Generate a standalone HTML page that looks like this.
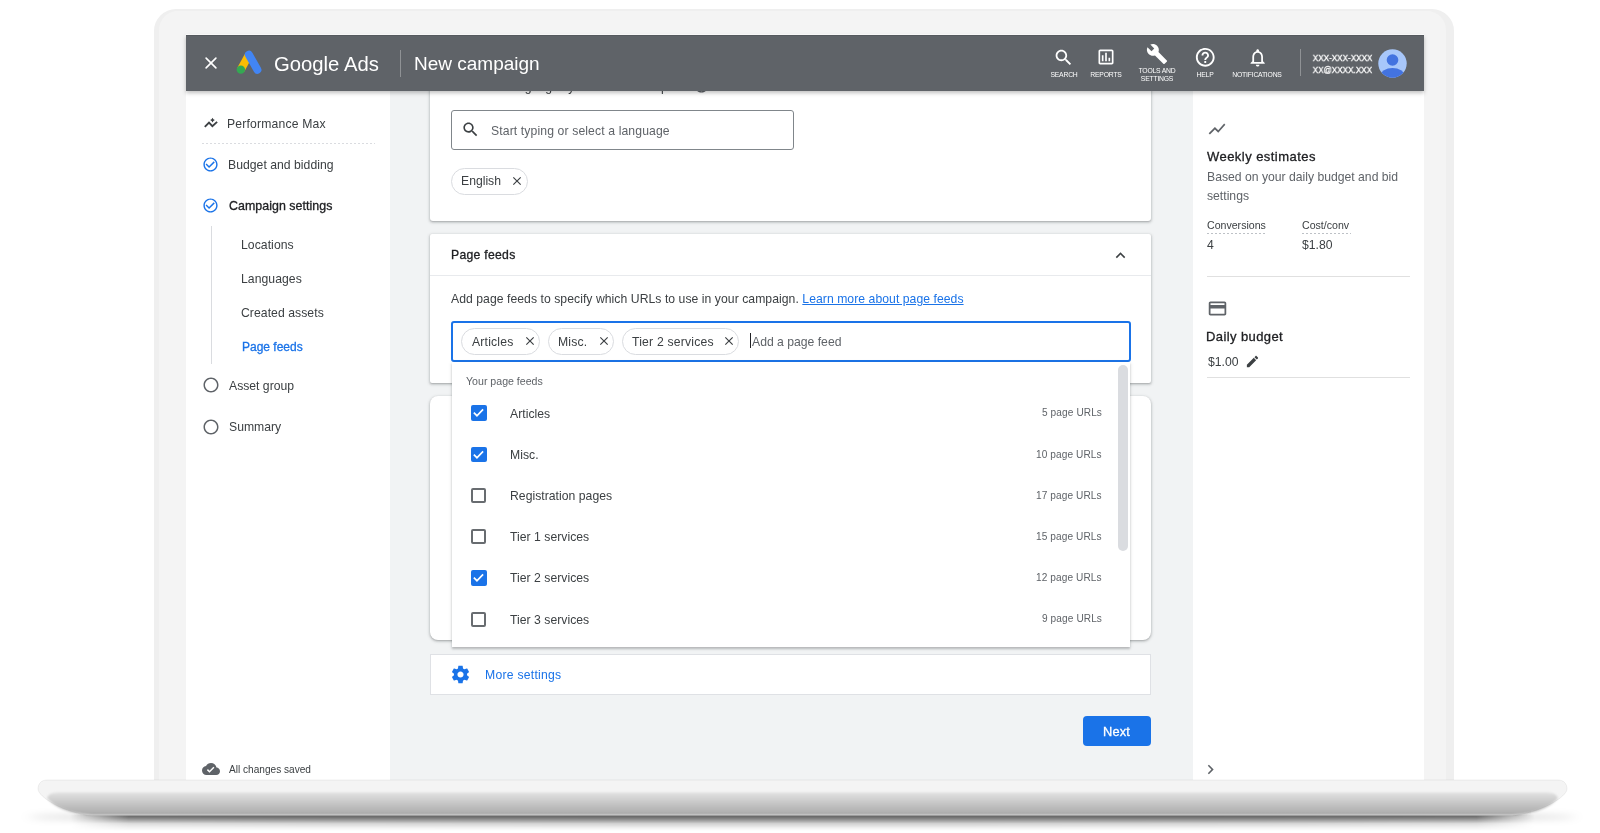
<!DOCTYPE html>
<html><head><meta charset="utf-8"><style>
html,body{margin:0;padding:0;width:1600px;height:833px;overflow:hidden;background:#fff;position:relative;}
.t{position:absolute;white-space:nowrap;font-family:"Liberation Sans", sans-serif;will-change:transform;}
svg{display:block;}
</style></head><body>
<div style="position:absolute;left:154px;top:8.5px;width:1300px;height:800px;background:#efefef;border-radius:22px 22px 0 0;"></div>
<div style="position:absolute;left:159px;top:10.5px;width:1287px;height:800px;background:#f4f4f4;border-radius:19px 19px 0 0;"></div>
<div style="position:absolute;left:186px;top:35px;width:1238px;height:745px;background:#f1f3f4;overflow:hidden;"></div>
<div style="position:absolute;left:186px;top:91px;width:204px;height:689px;background:#fff;"></div>
<div style="position:absolute;left:1193px;top:91px;width:231px;height:689px;background:#fff;"></div>
<div style="position:absolute;left:430px;top:60px;width:721px;height:161px;background:#fff;box-shadow:0 1px 2px rgba(60,64,67,.3),0 1px 3px 1px rgba(60,64,67,.15);border-radius:0 0 3px 3px;"></div>
<div class="t" style="left:451px;top:80.67px;font-size:12.2px;line-height:12.2px;color:#3c4043;font-weight:400;">Select the languages your customers speak</div>
<svg style="position:absolute;left:692.5px;top:77px;" width="17" height="17" viewBox="0 0 24 24"><path fill="#5f6368" d="M11 18h2v-2h-2v2zm1-16C6.48 2 2 6.48 2 12s4.48 10 10 10 10-4.48 10-10S17.52 2 12 2zm0 18c-4.41 0-8-3.59-8-8s3.590-8 8-8 8 3.59 8 8-3.59 8-8 8zm0-14c-2.21 0-4 1.79-4 4h2c0-1.1.9-2 2-2s2 .9 2 2c0 2-3 1.75-3 5h2c0-2.25 3-2.5 3-5 0-2.21-1.79-4-4-4z"/></svg>
<div style="position:absolute;left:451px;top:109.5px;width:343px;height:40px;box-sizing:border-box;border:1px solid #80868b;border-radius:3px;background:#fff;"></div>
<svg style="position:absolute;left:461px;top:120px;" width="19" height="19" viewBox="0 0 24 24"><path fill="#3c4043" d="M15.5 14h-.79l-.28-.27C15.410 12.59 16 11.11 16 9.5 16 5.91 13.09 3 9.5 3S3 5.91 3 9.5 5.91 16 9.5 16c1.61 0 3.09-.59 4.23-1.57l.27.28v.79l5 4.99L20.49 19l-4.99-5zm-6 0C7.01 14 5 11.99 5 9.5S7.01 5 9.5 5 14 7.01 14 9.5 11.99 14 9.5 14z"/></svg>
<div class="t" style="left:491px;top:124.57px;font-size:12.2px;line-height:12.2px;color:#5f6368;font-weight:400;letter-spacing:0.12px;">Start typing or select a language</div>
<div style="position:absolute;left:451px;top:167.5px;width:77px;height:27px;box-sizing:border-box;border:1px solid #dadce0;border-radius:14px;"></div>
<div class="t" style="left:461.4px;top:175.27px;font-size:12.2px;line-height:12.2px;color:#3c4043;font-weight:400;">English</div>
<svg style="position:absolute;left:510px;top:174px;" width="14" height="14" viewBox="0 0 24 24"><path fill="#3c4043" d="M19 6.41L17.59 5 12 10.59 6.41 5 5 6.41 10.59 12 5 17.59 6.41 19 12 13.41 17.59 19 19 17.59 13.41 12z"/></svg>
<div style="position:absolute;left:430px;top:234px;width:721px;height:148.5px;background:#fff;box-shadow:0 1px 2px rgba(60,64,67,.3),0 1px 3px 1px rgba(60,64,67,.15);border-radius:2px;"></div>
<div class="t" style="left:451px;top:248.87px;font-size:12.2px;line-height:12.2px;color:#202124;font-weight:400;letter-spacing:0.29px;-webkit-text-stroke:0.3px #202124;">Page feeds</div>
<svg style="position:absolute;left:1111px;top:245.5px;" width="19" height="19" viewBox="0 0 24 24"><path fill="#3c4043" d="M12 8l-6 6 1.41 1.41L12 10.83l4.59 4.58L18 14z"/></svg>
<div style="position:absolute;left:430px;top:274.5px;width:721px;height:1px;background:#e8eaed;"></div>
<div class="t" style="left:451px;top:292.57px;font-size:12.2px;line-height:12.2px;color:#3c4043;font-weight:400;letter-spacing:0.05px;">Add page feeds to specify which URLs to use in your campaign. <span style="color:#1a73e8;text-decoration:underline">Learn more about page feeds</span></div>
<div style="position:absolute;left:451px;top:321px;width:679.5px;height:40.5px;box-sizing:border-box;border:2px solid #1a73e8;border-radius:3px;background:#fff;"></div>
<div style="position:absolute;left:461px;top:327.6px;width:79px;height:27px;box-sizing:border-box;border:1px solid #dadce0;border-radius:14px;"></div>
<div class="t" style="left:472px;top:335.77px;font-size:12.2px;line-height:12.2px;color:#3c4043;font-weight:400;letter-spacing:0.2px;">Articles</div>
<svg style="position:absolute;left:523px;top:334px;" width="14" height="14" viewBox="0 0 24 24"><path fill="#3c4043" d="M19 6.41L17.59 5 12 10.59 6.41 5 5 6.41 10.59 12 5 17.59 6.41 19 12 13.41 17.59 19 19 17.59 13.41 12z"/></svg>
<div style="position:absolute;left:547.6px;top:327.6px;width:66.39999999999998px;height:27px;box-sizing:border-box;border:1px solid #dadce0;border-radius:14px;"></div>
<div class="t" style="left:558.4px;top:335.77px;font-size:12.2px;line-height:12.2px;color:#3c4043;font-weight:400;letter-spacing:0.2px;">Misc.</div>
<svg style="position:absolute;left:597px;top:334px;" width="14" height="14" viewBox="0 0 24 24"><path fill="#3c4043" d="M19 6.41L17.59 5 12 10.59 6.41 5 5 6.41 10.59 12 5 17.59 6.41 19 12 13.41 17.59 19 19 17.59 13.41 12z"/></svg>
<div style="position:absolute;left:621.6px;top:327.6px;width:117.79999999999995px;height:27px;box-sizing:border-box;border:1px solid #dadce0;border-radius:14px;"></div>
<div class="t" style="left:632.4px;top:335.77px;font-size:12.2px;line-height:12.2px;color:#3c4043;font-weight:400;letter-spacing:0.2px;">Tier 2 services</div>
<svg style="position:absolute;left:722px;top:334px;" width="14" height="14" viewBox="0 0 24 24"><path fill="#3c4043" d="M19 6.41L17.59 5 12 10.59 6.41 5 5 6.41 10.59 12 5 17.59 6.41 19 12 13.41 17.59 19 19 17.59 13.41 12z"/></svg>
<div style="position:absolute;left:749.5px;top:333px;width:1px;height:15px;background:#202124;"></div>
<div class="t" style="left:752px;top:335.77px;font-size:12.2px;line-height:12.2px;color:#5f6368;font-weight:400;">Add a page feed</div>
<div style="position:absolute;left:430px;top:396px;width:721px;height:244px;background:#fff;box-shadow:0 1px 2px rgba(60,64,67,.3),0 1px 3px 1px rgba(60,64,67,.15);border-radius:8px;"></div>
<div style="position:absolute;left:451.5px;top:361.5px;width:678.5px;height:285.5px;background:#fff;box-shadow:0 2px 2px rgba(60,64,67,.25),0 1px 4px 0 rgba(60,64,67,.15);"></div>
<div class="t" style="left:465.6px;top:375.93px;font-size:10.6px;line-height:10.6px;color:#5f6368;font-weight:400;">Your page feeds</div>
<div style="position:absolute;left:1118px;top:365px;width:10px;height:186px;background:#dadce0;border-radius:5px;"></div>
<div style="position:absolute;left:471.3px;top:405.3px;width:15.6px;height:15.6px;background:#1a73e8;border-radius:2px;"></div>
<svg style="position:absolute;left:471.3px;top:405.3px;" width="15.6" height="15.6" viewBox="0 0 16 16"><path d="M2.9 7.9l3.2 3.1 6.3-6.6" fill="none" stroke="#fff" stroke-width="1.75"/></svg>
<div class="t" style="left:509.8px;top:407.57px;font-size:12.2px;line-height:12.2px;color:#3c4043;font-weight:400;letter-spacing:0.03px;">Articles</div>
<div class="t" style="right:498px;top:408.45px;font-size:10.1px;line-height:10.1px;color:#5f6368;font-weight:400;letter-spacing:0.1px;">5 page URLs</div>
<div style="position:absolute;left:471.3px;top:446.5px;width:15.6px;height:15.6px;background:#1a73e8;border-radius:2px;"></div>
<svg style="position:absolute;left:471.3px;top:446.5px;" width="15.6" height="15.6" viewBox="0 0 16 16"><path d="M2.9 7.9l3.2 3.1 6.3-6.6" fill="none" stroke="#fff" stroke-width="1.75"/></svg>
<div class="t" style="left:509.8px;top:448.77px;font-size:12.2px;line-height:12.2px;color:#3c4043;font-weight:400;letter-spacing:0.03px;">Misc.</div>
<div class="t" style="right:498px;top:449.65px;font-size:10.1px;line-height:10.1px;color:#5f6368;font-weight:400;letter-spacing:0.1px;">10 page URLs</div>
<div style="position:absolute;left:471px;top:488.0px;width:15.3px;height:15.3px;box-sizing:border-box;border:2px solid #686c70;border-radius:2px;"></div>
<div class="t" style="left:509.8px;top:489.97px;font-size:12.2px;line-height:12.2px;color:#3c4043;font-weight:400;letter-spacing:0.03px;">Registration pages</div>
<div class="t" style="right:498px;top:490.85px;font-size:10.1px;line-height:10.1px;color:#5f6368;font-weight:400;letter-spacing:0.1px;">17 page URLs</div>
<div style="position:absolute;left:471px;top:529.2px;width:15.3px;height:15.3px;box-sizing:border-box;border:2px solid #686c70;border-radius:2px;"></div>
<div class="t" style="left:509.8px;top:531.17px;font-size:12.2px;line-height:12.2px;color:#3c4043;font-weight:400;letter-spacing:0.03px;">Tier 1 services</div>
<div class="t" style="right:498px;top:532.05px;font-size:10.1px;line-height:10.1px;color:#5f6368;font-weight:400;letter-spacing:0.1px;">15 page URLs</div>
<div style="position:absolute;left:471.3px;top:570.1000000000001px;width:15.6px;height:15.6px;background:#1a73e8;border-radius:2px;"></div>
<svg style="position:absolute;left:471.3px;top:570.1000000000001px;" width="15.6" height="15.6" viewBox="0 0 16 16"><path d="M2.9 7.9l3.2 3.1 6.3-6.6" fill="none" stroke="#fff" stroke-width="1.75"/></svg>
<div class="t" style="left:509.8px;top:572.37px;font-size:12.2px;line-height:12.2px;color:#3c4043;font-weight:400;letter-spacing:0.03px;">Tier 2 services</div>
<div class="t" style="right:498px;top:573.25px;font-size:10.1px;line-height:10.1px;color:#5f6368;font-weight:400;letter-spacing:0.1px;">12 page URLs</div>
<div style="position:absolute;left:471px;top:611.6px;width:15.3px;height:15.3px;box-sizing:border-box;border:2px solid #686c70;border-radius:2px;"></div>
<div class="t" style="left:509.8px;top:613.57px;font-size:12.2px;line-height:12.2px;color:#3c4043;font-weight:400;letter-spacing:0.03px;">Tier 3 services</div>
<div class="t" style="right:498px;top:614.45px;font-size:10.1px;line-height:10.1px;color:#5f6368;font-weight:400;letter-spacing:0.1px;">9 page URLs</div>
<div style="position:absolute;left:430px;top:654px;width:721px;height:40.5px;box-sizing:border-box;border:1px solid #dfe1e5;background:#fff;"></div>
<svg style="position:absolute;left:449.8px;top:663.7px;" width="21" height="21" viewBox="0 0 24 24"><path fill="#1a73e8" d="M19.43 12.98c.04-.32.07-.64.07-.98s-.03-.66-.07-.98l2.11-1.65c.19-.15.24-.42.12-.64l-2-3.46c-.12-.22-.39-.3-.61-.22l-2.49 1c-.52-.4-1.08-.73-1.69-.98l-.38-2.65C14.46 2.18 14.25 2 14 2h-4c-.25 0-.46.18-.49.42l-.38 2.65c-.61.25-1.17.59-1.69.98l-2.49-1c-.23-.09-.49 0-.61.22l-2 3.46c-.13.22-.07.49.12.64l2.11 1.650c-.04.32-.07.65-.07.98s.03.66.07.98l-2.11 1.65c-.19.15-.24.42-.12.64l2 3.46c.12.22.39.3.61.22l2.49-1c.52.4 1.08.73 1.69.98l.38 2.65c.03.24.24.42.49.42h4c.25 0 .46-.18.49-.42l.38-2.65c.61-.25 1.17-.59 1.69-.98l2.49 1c.23.09.49 0 .61-.22l2-3.46c.12-.22.07-.49-.12-.64l-2.11-1.65zM12 15.5c-1.93 0-3.5-1.57-3.5-3.5s1.57-3.5 3.5-3.5 3.5 1.57 3.5 3.5-1.57 3.5-3.5 3.5z"/></svg>
<div class="t" style="left:484.8px;top:669.17px;font-size:12.2px;line-height:12.2px;color:#1a73e8;font-weight:400;letter-spacing:0.25px;">More settings</div>
<div style="position:absolute;left:1082.5px;top:715.7px;width:68.6px;height:30.6px;background:#1a73e8;border-radius:4px;"></div>
<div class="t" style="left:1102.9px;top:726.16px;font-size:12.8px;line-height:12.8px;color:#fff;font-weight:400;letter-spacing:0.2px;-webkit-text-stroke:0.3px #fff;">Next</div>
<svg style="position:absolute;left:202px;top:116px;" width="18" height="14" viewBox="0 0 18 14"><path d="M2.8 10.8L7 6.6L10.4 10.2L15.1 5.9" fill="none" stroke="#3c4043" stroke-width="1.9"/><path d="M10.5 1.7L11.4 3.2L12.9 4.1L11.4 5L10.5 6.5L9.6 5L8.1 4.1L9.6 3.2Z" fill="#3c4043"/></svg>
<div class="t" style="left:227.2px;top:117.97px;font-size:12.2px;line-height:12.2px;color:#3c4043;font-weight:400;letter-spacing:0.17px;">Performance Max</div>
<div style="position:absolute;left:202px;top:143px;width:173px;height:1px;background-image:linear-gradient(90deg,#dadce0 50%,transparent 50%);background-size:4px 1px;"></div>
<svg style="position:absolute;left:202.4px;top:156.2px;" width="17" height="17" viewBox="0 0 24 24"><path fill="#1a73e8" d="M16.59 7.58L10 14.17l-3.59-3.58L5 12l5 5 8-8zM12 2C6.48 2 2 6.48 2 12s4.48 10 10 10 10-4.48 10-10S17.52 2 12 2zm0 18c-4.42 0-8-3.58-8-8s3.58-8 8-8 8 3.58 8 8-3.58 8-8 8z"/></svg>
<div class="t" style="left:227.6px;top:159.37px;font-size:12.2px;line-height:12.2px;color:#3c4043;font-weight:400;letter-spacing:0.03px;">Budget and bidding</div>
<svg style="position:absolute;left:202.4px;top:197.1px;" width="17" height="17" viewBox="0 0 24 24"><path fill="#1a73e8" d="M16.59 7.58L10 14.17l-3.59-3.58L5 12l5 5 8-8zM12 2C6.48 2 2 6.48 2 12s4.48 10 10 10 10-4.48 10-10S17.52 2 12 2zm0 18c-4.42 0-8-3.58-8-8s3.58-8 8-8 8 3.58 8 8-3.58 8-8 8z"/></svg>
<div class="t" style="left:228.6px;top:200.20px;font-size:12.4px;line-height:12.4px;color:#202124;font-weight:400;letter-spacing:0.05px;-webkit-text-stroke:0.3px #202124;">Campaign settings</div>
<div style="position:absolute;left:210.5px;top:226px;width:1px;height:138px;background:#dadce0;"></div>
<div class="t" style="left:241.3px;top:238.67px;font-size:12.2px;line-height:12.2px;color:#3c4043;font-weight:400;letter-spacing:0.06px;">Locations</div>
<div class="t" style="left:241.3px;top:272.87px;font-size:12.2px;line-height:12.2px;color:#3c4043;font-weight:400;letter-spacing:0.06px;">Languages</div>
<div class="t" style="left:241.3px;top:307.07px;font-size:12.2px;line-height:12.2px;color:#3c4043;font-weight:400;letter-spacing:0.06px;">Created assets</div>
<div class="t" style="left:242px;top:341.34px;font-size:12px;line-height:12px;color:#1a73e8;font-weight:400;-webkit-text-stroke:0.3px #1a73e8;">Page feeds</div>
<svg style="position:absolute;left:202px;top:376px;" width="18" height="18" viewBox="0 0 24 24"><path fill="#5f6368" d="M12 2C6.48 2 2 6.48 2 12s4.48 10 10 10 10-4.48 10-10S17.52 2 12 2zm0 18c-4.42 0-8-3.58-8-8s3.58-8 8-8 8 3.58 8 8-3.58 8-8 8z"/></svg>
<div class="t" style="left:228.6px;top:379.87px;font-size:12.2px;line-height:12.2px;color:#3c4043;font-weight:400;">Asset group</div>
<svg style="position:absolute;left:202px;top:417.5px;" width="18" height="18" viewBox="0 0 24 24"><path fill="#5f6368" d="M12 2C6.48 2 2 6.48 2 12s4.48 10 10 10 10-4.48 10-10S17.52 2 12 2zm0 18c-4.42 0-8-3.58-8-8s3.58-8 8-8 8 3.58 8 8-3.58 8-8 8z"/></svg>
<div class="t" style="left:228.6px;top:420.77px;font-size:12.2px;line-height:12.2px;color:#3c4043;font-weight:400;">Summary</div>
<svg style="position:absolute;left:202px;top:760px;" width="18" height="18" viewBox="0 0 24 24"><path fill="#5f6368" d="M19.35 10.04C18.67 6.59 15.64 4 12 4 9.11 4 6.6 5.64 5.35 8.04 2.34 8.36 0 10.91 0 14c0 3.31 2.69 6 6 6h13c2.76 0 5-2.24 5-5 0-2.64-2.05-4.78-4.65-4.96zM10 17l-3.5-3.5 1.41-1.41L10 14.17 15.18 9l1.41 1.41L10 17z"/></svg>
<div class="t" style="left:229px;top:765.15px;font-size:10.1px;line-height:10.1px;color:#3c4043;font-weight:400;">All changes saved</div>
<svg style="position:absolute;left:1207px;top:119px;" width="20" height="20" viewBox="0 0 24 24"><path fill="#5f6368" d="M3.5 18.49l6-6.01 4 4L22 6.92l-1.41-1.41-7.09 7.97-4-4L2 16.99z"/></svg>
<div class="t" style="left:1207.2px;top:149.90px;font-size:13px;line-height:13px;color:#202124;font-weight:400;letter-spacing:0.45px;-webkit-text-stroke:0.3px #202124;">Weekly estimates</div>
<div class="t" style="left:1207.2px;top:171.27px;font-size:12.2px;line-height:12.2px;color:#5f6368;font-weight:400;">Based on your daily budget and bid</div>
<div class="t" style="left:1207.2px;top:190.17px;font-size:12.2px;line-height:12.2px;color:#5f6368;font-weight:400;">settings</div>
<div class="t" style="left:1207.2px;top:220.33px;font-size:10.6px;line-height:10.6px;color:#3c4043;font-weight:400;">Conversions</div>
<div style="position:absolute;left:1207px;top:232.5px;width:59px;height:1px;background-image:linear-gradient(90deg,#bdc1c6 60%,transparent 60%);background-size:4px 1px;"></div>
<div class="t" style="left:1301.6px;top:220.33px;font-size:10.6px;line-height:10.6px;color:#3c4043;font-weight:400;">Cost/conv</div>
<div style="position:absolute;left:1301.6px;top:232.5px;width:49px;height:1px;background-image:linear-gradient(90deg,#bdc1c6 60%,transparent 60%);background-size:4px 1px;"></div>
<div class="t" style="left:1207.2px;top:238.77px;font-size:12.2px;line-height:12.2px;color:#3c4043;font-weight:400;">4</div>
<div class="t" style="left:1301.6px;top:238.77px;font-size:12.2px;line-height:12.2px;color:#3c4043;font-weight:400;">$1.80</div>
<div style="position:absolute;left:1207px;top:276px;width:203px;height:1px;background:#e0e0e0;"></div>
<svg style="position:absolute;left:1207px;top:298.3px;" width="21" height="21" viewBox="0 0 24 24"><path fill="#5f6368" d="M20 4H4c-1.11 0-1.99.89-1.99 2L2 18c0 1.11.89 2 2 2h16c1.11 0 2-.89 2-2V6c0-1.11-.89-2-2-2zm0 14H4v-6h16v6zm0-10H4V6h16v2z"/></svg>
<div class="t" style="left:1206.2px;top:329.80px;font-size:13px;line-height:13px;color:#202124;font-weight:400;letter-spacing:0.4px;-webkit-text-stroke:0.3px #202124;">Daily budget</div>
<div class="t" style="left:1207.5px;top:356.17px;font-size:12.2px;line-height:12.2px;color:#3c4043;font-weight:400;">$1.00</div>
<svg style="position:absolute;left:1245px;top:354px;" width="15" height="15" viewBox="0 0 24 24"><path fill="#3c4043" d="M3 17.25V21h3.75L17.81 9.94l-3.75-3.75L3 17.25zM20.71 7.04c.39-.39.39-1.02 0-1.41l-2.34-2.34c-.39-.39-1.02-.39-1.41 0l-1.83 1.83 3.75 3.75 1.83-1.830z"/></svg>
<div style="position:absolute;left:1207px;top:377px;width:203px;height:1px;background:#e0e0e0;"></div>
<svg style="position:absolute;left:1201px;top:760px;" width="19" height="19" viewBox="0 0 24 24"><path fill="#5f6368" d="M10 6L8.59 7.41 13.17 12l-4.58 4.59L10 18l6-6z"/></svg>
<div style="position:absolute;left:186px;top:34px;width:1238px;height:1px;background:#fff;"></div>
<div style="position:absolute;left:186px;top:35px;width:1238px;height:56px;background:#5f6368;box-shadow:0 2px 4px rgba(0,0,0,.25);border-top:1.5px solid #55595e;box-sizing:border-box;"></div>
<svg style="position:absolute;left:203.2px;top:55.4px;" width="16" height="16" viewBox="0 0 16 16"><path d="M3.1 3.1L12.9 12.9M12.9 3.1L3.1 12.9" stroke="#fff" stroke-width="1.6" stroke-linecap="round"/></svg>
<svg style="position:absolute;left:232px;top:46px;" width="34" height="32" viewBox="0 0 34 32"><line x1="16.9" y1="8.8" x2="8.85" y2="23.65" stroke="#fbbc04" stroke-width="8"/><line x1="16.9" y1="8.8" x2="25.4" y2="23.7" stroke="#4285f4" stroke-width="8" stroke-linecap="round"/><circle cx="8.85" cy="23.65" r="4.2" fill="#34a853"/></svg>
<div class="t" style="left:274px;top:54.32px;font-size:20.3px;line-height:20.3px;color:#fff;font-weight:400;">Google Ads</div>
<div style="position:absolute;left:399.5px;top:50px;width:1px;height:27px;background:rgba(255,255,255,.3);"></div>
<div class="t" style="left:414.4px;top:54.42px;font-size:19px;line-height:19px;color:#fff;font-weight:400;">New campaign</div>
<svg style="position:absolute;left:1052.9px;top:46.9px;" width="21.2" height="21.2" viewBox="0 0 24 24"><path fill="#fff" d="M15.5 14h-.79l-.28-.27C15.410 12.59 16 11.11 16 9.5 16 5.91 13.09 3 9.5 3S3 5.91 3 9.5 5.91 16 9.5 16c1.61 0 3.09-.59 4.23-1.57l.27.28v.79l5 4.99L20.49 19l-4.99-5zm-6 0C7.01 14 5 11.99 5 9.5S7.01 5 9.5 5 14 7.01 14 9.5 11.99 14 9.5 14z"/></svg>
<div class="t" style="left:1063.5px;top:72.24px;font-size:6.8px;line-height:6.8px;color:#fff;font-weight:400;transform:translateX(-50%);letter-spacing:-0.2px;">SEARCH</div>
<svg style="position:absolute;left:1096px;top:47px;" width="20" height="20" viewBox="0 0 24 24"><path fill="#fff" d="M19 3H5c-1.1 0-2 .9-2 2v14c0 1.1.9 2 2 2h14c1.1 0 2-.9 2-2V5c0-1.1-.9-2-2-2zm0 16H5V5h14v14zM7 10h2v7H7zm4-3h2v10h-2zm4 6h2v4h-2z"/></svg>
<div class="t" style="left:1106.25px;top:72.24px;font-size:6.8px;line-height:6.8px;color:#fff;font-weight:400;transform:translateX(-50%);letter-spacing:-0.2px;">REPORTS</div>
<svg style="position:absolute;left:1146px;top:43px;" width="22" height="22" viewBox="0 0 24 24"><path fill="#fff" d="M22.7 19l-9.1-9.1c.9-2.3.4-5-1.5-6.9-2-2-5-2.4-7.4-1.3L9 6 6 9 1.6 4.7C.4 7.1.9 10.1 2.9 12.1c1.9 1.9 4.6 2.4 6.9 1.5l9.1 9.1c.4.4 1 .4 1.4 0l2.3-2.3c.5-.4.5-1.1.1-1.4z"/></svg>
<div class="t" style="left:1156.75px;top:68.24px;font-size:6.8px;line-height:6.8px;color:#fff;font-weight:400;transform:translateX(-50%);letter-spacing:-0.2px;">TOOLS AND</div>
<div class="t" style="left:1156.75px;top:75.74px;font-size:6.8px;line-height:6.8px;color:#fff;font-weight:400;transform:translateX(-50%);letter-spacing:-0.2px;">SETTINGS</div>
<svg style="position:absolute;left:1193.5px;top:46px;" width="22.5" height="22.5" viewBox="0 0 24 24"><path fill="#fff" d="M11 18h2v-2h-2v2zm1-16C6.48 2 2 6.48 2 12s4.48 10 10 10 10-4.48 10-10S17.52 2 12 2zm0 18c-4.41 0-8-3.59-8-8s3.590-8 8-8 8 3.59 8 8-3.59 8-8 8zm0-14c-2.21 0-4 1.79-4 4h2c0-1.1.9-2 2-2s2 .9 2 2c0 2-3 1.75-3 5h2c0-2.25 3-2.5 3-5 0-2.21-1.79-4-4-4z"/></svg>
<div class="t" style="left:1204.5px;top:72.24px;font-size:6.8px;line-height:6.8px;color:#fff;font-weight:400;transform:translateX(-50%);letter-spacing:-0.2px;">HELP</div>
<svg style="position:absolute;left:1247px;top:46.8px;" width="21.3" height="21.3" viewBox="0 0 24 24"><path fill="#fff" d="M12 22c1.1 0 2-.9 2-2h-4c0 1.1.89 2 2 2zm6-6v-5c0-3.07-1.64-5.64-4.5-6.32V4c0-.83-.67-1.5-1.5-1.5s-1.5.67-1.5 1.5v.68C7.63 5.36 6 7.92 6 11v5l-2 2v1h16v-1l-2-2zm-2 1H8v-6c0-2.480 1.51-4.5 4-4.5s4 2.02 4 4.5v6z"/></svg>
<div class="t" style="left:1257.4px;top:72.24px;font-size:6.8px;line-height:6.8px;color:#fff;font-weight:400;transform:translateX(-50%);letter-spacing:-0.2px;">NOTIFICATIONS</div>
<div style="position:absolute;left:1300px;top:49.3px;width:1px;height:27px;background:rgba(255,255,255,.3);"></div>
<div class="t" style="right:227.79999999999995px;top:53.61px;font-size:9.2px;line-height:9.2px;color:#fff;font-weight:400;transform:scaleX(0.885);transform-origin:100% 50%;-webkit-text-stroke:0.3px #fff;">XXX-XXX-XXXX</div>
<div class="t" style="right:227.79999999999995px;top:65.61px;font-size:9.2px;line-height:9.2px;color:#fff;font-weight:400;transform:scaleX(0.885);transform-origin:100% 50%;-webkit-text-stroke:0.3px #fff;">XX@XXXX.XXX</div>
<svg style="position:absolute;left:1378px;top:49px;" width="29" height="29" viewBox="0 0 29 29"><defs><clipPath id="av"><circle cx="14.5" cy="14.5" r="14.2"/></clipPath></defs><circle cx="14.5" cy="14.5" r="14.2" fill="#a8c7fa"/><g clip-path="url(#av)"><circle cx="14.5" cy="11" r="5.8" fill="#4373e0"/><ellipse cx="14.5" cy="27" rx="12" ry="8" fill="#4373e0"/></g></svg>
<svg style="position:absolute;left:0;top:770px" width="1600" height="63" viewBox="0 770 1600 63">
<defs>
<linearGradient id="bg" gradientUnits="userSpaceOnUse" x1="0" y1="780" x2="0" y2="816">
<stop offset="0" stop-color="#f7f7f7"/><stop offset="0.3" stop-color="#f3f3f3"/><stop offset="0.4" stop-color="#dcdcdc"/><stop offset="0.93" stop-color="#adadad"/><stop offset="1" stop-color="#929292"/>
</linearGradient>
<linearGradient id="sg" gradientUnits="userSpaceOnUse" x1="0" y1="814.5" x2="0" y2="831">
<stop offset="0" stop-color="#000" stop-opacity="0.68"/><stop offset="0.2" stop-color="#000" stop-opacity="0.45"/><stop offset="0.55" stop-color="#000" stop-opacity="0.12"/><stop offset="1" stop-color="#000" stop-opacity="0"/>
</linearGradient>
<linearGradient id="mg" gradientUnits="userSpaceOnUse" x1="70" y1="0" x2="1535" y2="0"><stop offset="0" stop-color="#fff" stop-opacity="0"/><stop offset="0.04" stop-color="#fff" stop-opacity="1"/><stop offset="0.96" stop-color="#fff" stop-opacity="1"/><stop offset="1" stop-color="#fff" stop-opacity="0"/></linearGradient>
<mask id="mk"><rect x="0" y="770" width="1600" height="63" fill="url(#mg)"/></mask>
<filter id="sh" x="-5%" y="-300%" width="110%" height="700%"><feGaussianBlur stdDeviation="6 3.5"/></filter>
<filter id="b1" x="-2%" y="-50%" width="104%" height="200%"><feGaussianBlur stdDeviation="1.1"/></filter>
</defs>
<ellipse cx="802" cy="817" rx="775" ry="6" fill="rgba(0,0,0,.16)" filter="url(#sh)"/>
<rect x="70" y="814.5" width="1465" height="17" fill="url(#sg)" mask="url(#mk)"/>
<path d="M47 780 H1558 C1564 780 1567 784 1567 789 C1567 797 1540 813 1512 815.5 H92 C64 813 38 797 38 789 C38 784 41 780 47 780 Z" fill="#f4f4f4"/>
<path d="M60 792 H1545 C1553 792 1558 795 1557.5 798.5 C1551 807 1535 813.8 1512 815 H92 C69 813.8 54 807 47.5 798.5 C47 795 52 792 60 792 Z" fill="url(#bg)" filter="url(#b1)"/>
<path d="M47 780 H1558 C1564 780 1567 784 1567 789 C1567 797 1540 813 1512 815.5 H92 C64 813 38 797 38 789 C38 784 41 780 47 780 Z" fill="none" stroke="rgba(0,0,0,.07)" stroke-width="0.8"/>
</svg>
</body></html>
